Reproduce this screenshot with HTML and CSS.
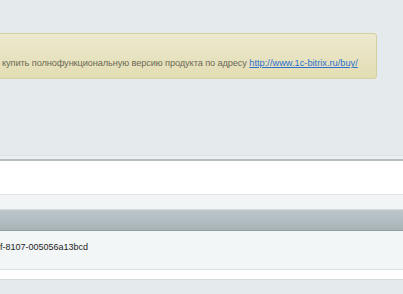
FILE: index.html
```html
<!DOCTYPE html>
<html lang="ru">
<head>
    <meta charset="UTF-8">
    <title>Лицензия</title>
    <link rel="stylesheet" href="styles.css">
</head>
<body>
<div class="page">
    <div class="notice">
        купить полнофункциональную версию продукта по адресу <a href="#">http://www.1c-bitrix.ru/buy/</a>
    </div>

    <div class="panel">
        <div class="panel-top"></div>
        <div class="panel-body"></div>
        <div class="panel-foot"></div>
        <div class="grid">
            <div class="grid-head"></div>
            <div class="grid-row">f-8107-005056a13bcd</div>
            <div class="grid-end"></div>
        </div>
    </div>
</div>
</body>
</html>
```

FILE: styles.css
```css
*{
    margin:0;
    padding:0;
    box-sizing: border-box;
}
body{
    background: #e5eaed;
    font-family: "Liberation Sans", Arial, sans-serif;
    overflow: hidden;
}
.page{
    padding-top: 33px;
}

.notice{
    margin-left: -20px;
    width: 397px;
    height: 46px;
    padding: 23px 0 0 21px;
    border: 1px solid #d6cf9f;
    border-radius: 3px;
    background: linear-gradient(#ece9d0, #e3ddb2);
    color: #6c6a56;
    font-size: 9.25px;
    line-height: 12px;
    letter-spacing: -0.12px;
    white-space: nowrap;
}
.notice a{
    color: #2b6fd0;
    text-decoration: underline;
    letter-spacing: 0;
}

.panel{
    margin-top: 76px;
}
.panel-top{
    height: 6px;
    border-top: 1px solid #dbe1e4;
    background: #eaeff1;
    border-bottom: 2px solid #b6bec2;
}
.panel-body{
    height: 34px;
    background: #fff;
    border-bottom: 1px solid #dfe5e8;
}
.panel-foot{
    height: 15px;
    background: #f2f5f6;
    border-bottom: 1px solid #d5dcdf;
}

.grid-head{
    height: 21px;
    background: linear-gradient(#bcc6ca, #a9b4b8);
    border-bottom: 1px solid #939ea2;
}
.grid-row{
    height: 39px;
    padding-top: 10px;
    background: #f3f6f7;
    border-bottom: 1px solid #dae1e4;
    color: #1e1e1e;
    font-size: 9px;
    line-height: 12px;
}
.grid-end{
    height: 10px;
    background: #fff;
    border-bottom: 1px solid #d3dadd;
}
```
